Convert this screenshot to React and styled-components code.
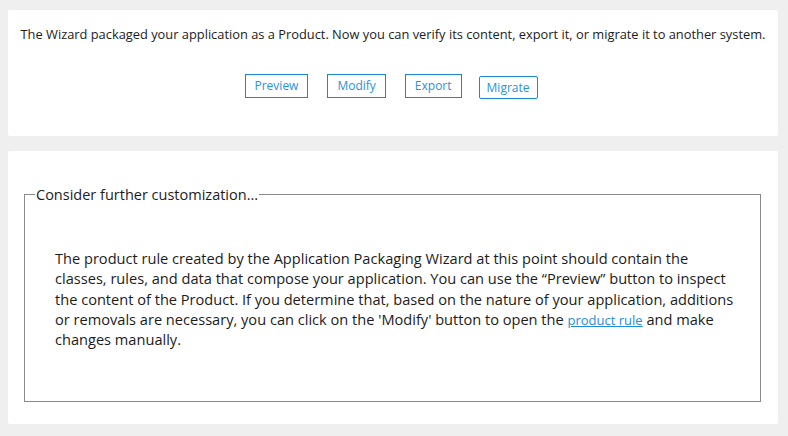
import styled, {createGlobalStyle} from "styled-components";

const GlobalStyle = createGlobalStyle`
  html, body {
    margin: 0;
    padding: 0;
    background: #efefef;
  }
  body {
    font-family: "Open Sans", "Noto Sans", sans-serif;
    color: #1c1c1c;
  }
`;

const Page = styled.div`
  padding: 10px 10px 13px 8px;
  display: flex;
  flex-direction: column;
  gap: 15px;
`;

const Panel = styled.section`
  background: #ffffff;
  border-radius: 2px;
  padding: ${p => p.$padding};
`;

const Intro = styled.p`
  margin: 0;
  font-size: 12.85px;
  line-height: 18px;
  text-align: center;
  white-space: nowrap;
`;

const ButtonRow = styled.div`
  display: flex;
  justify-content: center;
  align-items: flex-start;
  gap: 19px;
  margin-top: 31px;
  padding-right: 4px;
`;

const ActionButton = styled.button`
  height: ${p => (p.$rounded ? "23px" : "24px")};
  margin-top: ${p => (p.$rounded ? "2px" : "0")};
  margin-left: ${p => (p.$rounded ? "-2px" : "0")};
  padding: 0 ${p => (p.$rounded ? "7px" : "9px")};
  border: 1px solid #1b87cf;
  border-radius: ${p => (p.$rounded ? "2px" : "0")};
  background: #ffffff;
  color: #2a93d8;
  font-family: "Open Sans", "Noto Sans", sans-serif;
  font-size: 12px;
  line-height: 20px;
  cursor: pointer;
`;

const Group = styled.fieldset`
  margin: 0;
  padding: 0 10px 0 10px;
  border: 1px solid #8a8a8a;
`;

const Legend = styled.legend`
  padding: 0 1px;
  font-size: 14.5px;
  line-height: 19px;
  color: #1c1c1c;
`;

const Body = styled.p`
  margin: 0;
  padding: 44px 16px 52px 20px;
  font-size: 14.6px;
  line-height: 20.3px;
`;

const Link = styled.a`
  color: #1f8dd6;
  font-size: 13px;
  line-height: 1;
  text-decoration: underline;
  cursor: pointer;
`;

export default function App() {
    return <>
        <GlobalStyle/>
        <Page>
            <Panel $padding="15px 8px 37px 8px">
                <Intro>
                    The Wizard packaged your application as a Product. Now you can verify its content, export it, or migrate it to another system.
                </Intro>
                <ButtonRow>
                    <ActionButton>Preview</ActionButton>
                    <ActionButton>Modify</ActionButton>
                    <ActionButton>Export</ActionButton>
                    <ActionButton $rounded>Migrate</ActionButton>
                </ButtonRow>
            </Panel>
            <Panel $padding="34px 17px 22px 16px">
                <Group>
                    <Legend>Consider further customization...</Legend>
                    <Body>
                        The product rule created by the Application Packaging Wizard at this point should contain the classes, rules, and data that compose your application. You can use the “Preview” button to inspect the content of the Product. If you determine that, based on the nature of your application, additions or removals are necessary, you can click on the 'Modify' button to open the <Link>product rule</Link> and make changes manually.
                    </Body>
                </Group>
            </Panel>
        </Page>
    </>;
}
